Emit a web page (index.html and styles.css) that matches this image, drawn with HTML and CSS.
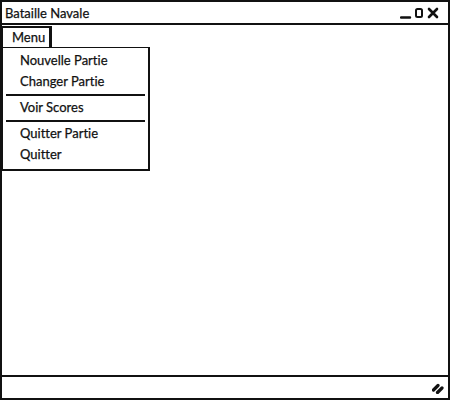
FILE: index.html
```html
<!DOCTYPE html>
<html>
<head>
<meta charset="utf-8">
<link rel="stylesheet" href="styles.css">
</head>
<body>
<div class="window">
  <div class="titlebar">
    <span class="title">Bataille Navale</span>
    <svg class="controls" width="42" height="12" viewBox="0 0 42 12">
      <path d="M1 10.5 H10" stroke="#111" stroke-width="2.4" stroke-linecap="round"/>
      <rect x="16" y="2" width="6" height="8" rx="1.5" fill="none" stroke="#111" stroke-width="2"/>
      <path d="M29 2 L37 10 M37 2 L29 10" stroke="#111" stroke-width="2.6" stroke-linecap="round"/>
    </svg>
  </div>
  <div class="menubar">
    <div class="menutab">Menu</div>
  </div>
  <div class="content"></div>
  <div class="statusbar">
    <svg class="grip" width="12" height="12" viewBox="0 0 12 12">
      <path d="M1.5 8 L6 3.5 M5.5 10.5 L10 6" stroke="#111" stroke-width="3.2" stroke-linecap="round"/>
    </svg>
  </div>
  <div class="dropdown">
    <div class="item">Nouvelle Partie</div>
    <div class="item">Changer Partie</div>
    <div class="sep"></div>
    <div class="item">Voir Scores</div>
    <div class="sep"></div>
    <div class="item">Quitter Partie</div>
    <div class="item">Quitter</div>
  </div>
</div>
</body>
</html>
```

FILE: styles.css
```css
html, body {
  margin: 0;
  padding: 0;
  background: #fff;
}
body {
  font-family: Lato, "Open Sans", sans-serif;
  font-size: 13px;
  color: #111;
  font-variant-ligatures: none;
  -webkit-text-stroke: 0.25px #111;
}
.window {
  position: relative;
  width: 450px;
  height: 400px;
  box-sizing: border-box;
  border: 2px solid #111;
  display: flex;
  flex-direction: column;
}
.titlebar {
  height: 21px;
  border-bottom: 2px solid #111;
  display: flex;
  align-items: center;
  justify-content: space-between;
  padding: 0 6px 0 3px;
  flex: none;
}
.title {
  line-height: 20px;
}
.controls {
  margin-top: 1px;
}
.menubar {
  height: 24px;
  flex: none;
  display: flex;
  align-items: flex-start;
  padding-top: 1px;
  box-sizing: border-box;
}
.menutab {
  box-sizing: border-box;
  width: 50px;
  height: 24px;
  border: 1px solid #111;
  border-top-width: 2px;
  border-right-width: 3px;
  padding: 1px 0 0 9px;
  line-height: 16px;
}
.content {
  flex: 1;
}
.statusbar {
  height: 21px;
  border-top: 2px solid #111;
  flex: none;
  display: flex;
  align-items: center;
  justify-content: flex-end;
  padding-right: 4px;
}
.dropdown {
  position: absolute;
  left: 0;
  top: 45px;
  width: 148px;
  height: 124px;
  box-sizing: border-box;
  background: #fff;
  border: 1px solid #111;
  border-right-width: 2px;
  border-bottom-width: 2px;
  padding: 2px 3px 0 3px;
}
.item {
  height: 21px;
  line-height: 21px;
  padding-left: 14px;
}
.sep {
  height: 2px;
  background: #111;
  margin: 2px 0 1px;
}
```
